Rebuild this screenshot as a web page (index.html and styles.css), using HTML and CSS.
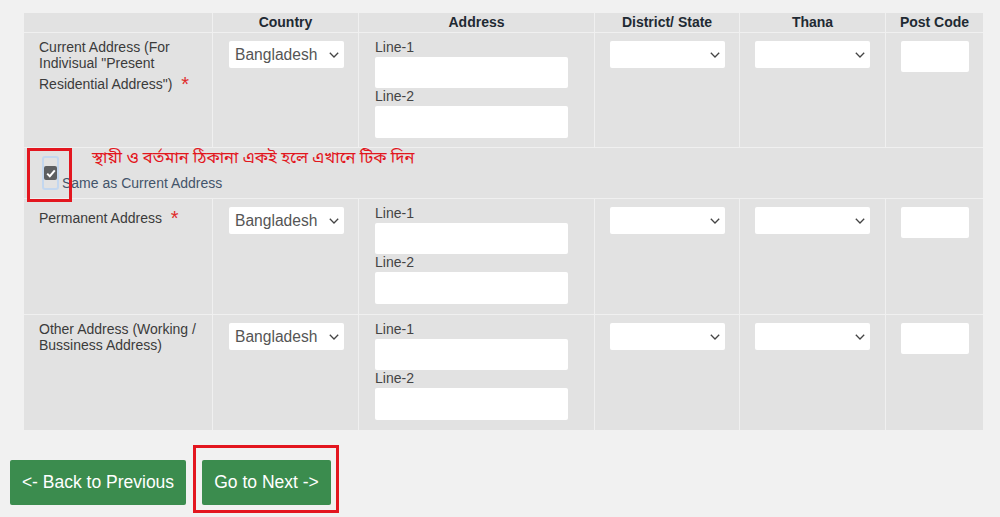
FILE: index.html
```html
<!DOCTYPE html>
<html lang="en">
<head>
<meta charset="utf-8">
<title>Address</title>
<link rel="stylesheet" href="styles.css">
</head>
<body>
<div class="page">
  <table class="addr">
    <thead>
      <tr>
        <th class="c-label"></th>
        <th class="c-country">Country</th>
        <th class="c-address">Address</th>
        <th class="c-district">District/ State</th>
        <th class="c-thana">Thana</th>
        <th class="c-post">Post Code</th>
      </tr>
    </thead>
    <tbody>
      <tr>
        <td class="label">Current Address (For Indivisual "Present Residential Address") <span class="req">*</span></td>
        <td><div class="sel sel-country"><span>Bangladesh</span><svg class="chev" width="10" height="6" viewBox="0 0 10 6"><path d="M0.8 0.8 L5 5 L9.2 0.8" fill="none" stroke="#444" stroke-width="1.3"/></svg></div></td>
        <td class="addr-cell">
          <div class="line-label">Line-1</div>
          <div class="inp inp-line"></div>
          <div class="line-label">Line-2</div>
          <div class="inp inp-line inp-line2"></div>
        </td>
        <td><div class="sel"><span></span><svg class="chev" width="10" height="6" viewBox="0 0 10 6"><path d="M0.8 0.8 L5 5 L9.2 0.8" fill="none" stroke="#444" stroke-width="1.3"/></svg></div></td>
        <td><div class="sel"><span></span><svg class="chev" width="10" height="6" viewBox="0 0 10 6"><path d="M0.8 0.8 L5 5 L9.2 0.8" fill="none" stroke="#444" stroke-width="1.3"/></svg></div></td>
        <td class="post"><div class="inp inp-post"></div></td>
      </tr>
      <tr>
        <td colspan="6" class="same-cell">
          <div class="same">
            <span class="note">স্থায়ী ও বর্তমান ঠিকানা একই হলে এখানে টিক দিন</span>
            <span class="focus"><span class="chk"><svg width="10" height="9" viewBox="0 0 10 9"><path d="M1.2 4.6 L3.8 7.2 L8.8 1.4" fill="none" stroke="#fff" stroke-width="2"/></svg></span></span>
            <span class="same-label">Same as Current Address</span>
            <span class="mark mark-chk"></span>
          </div>
        </td>
      </tr>
      <tr>
        <td class="label">Permanent Address <span class="req">*</span></td>
        <td><div class="sel sel-country"><span>Bangladesh</span><svg class="chev" width="10" height="6" viewBox="0 0 10 6"><path d="M0.8 0.8 L5 5 L9.2 0.8" fill="none" stroke="#444" stroke-width="1.3"/></svg></div></td>
        <td class="addr-cell tall">
          <div class="line-label">Line-1</div>
          <div class="inp inp-line"></div>
          <div class="line-label">Line-2</div>
          <div class="inp inp-line inp-line2"></div>
        </td>
        <td><div class="sel"><span></span><svg class="chev" width="10" height="6" viewBox="0 0 10 6"><path d="M0.8 0.8 L5 5 L9.2 0.8" fill="none" stroke="#444" stroke-width="1.3"/></svg></div></td>
        <td><div class="sel"><span></span><svg class="chev" width="10" height="6" viewBox="0 0 10 6"><path d="M0.8 0.8 L5 5 L9.2 0.8" fill="none" stroke="#444" stroke-width="1.3"/></svg></div></td>
        <td class="post"><div class="inp inp-post"></div></td>
      </tr>
      <tr class="last">
        <td class="label">Other Address (Working / Bussiness Address)</td>
        <td><div class="sel sel-country"><span>Bangladesh</span><svg class="chev" width="10" height="6" viewBox="0 0 10 6"><path d="M0.8 0.8 L5 5 L9.2 0.8" fill="none" stroke="#444" stroke-width="1.3"/></svg></div></td>
        <td class="addr-cell tall">
          <div class="line-label">Line-1</div>
          <div class="inp inp-line"></div>
          <div class="line-label">Line-2</div>
          <div class="inp inp-line inp-line2"></div>
        </td>
        <td><div class="sel"><span></span><svg class="chev" width="10" height="6" viewBox="0 0 10 6"><path d="M0.8 0.8 L5 5 L9.2 0.8" fill="none" stroke="#444" stroke-width="1.3"/></svg></div></td>
        <td><div class="sel"><span></span><svg class="chev" width="10" height="6" viewBox="0 0 10 6"><path d="M0.8 0.8 L5 5 L9.2 0.8" fill="none" stroke="#444" stroke-width="1.3"/></svg></div></td>
        <td class="post"><div class="inp inp-post"></div></td>
      </tr>
    </tbody>
  </table>

  <div class="actions">
    <button class="btn btn-back">&lt;- Back to Previous</button>
    <div class="next-wrap"><button class="btn btn-next">Go to Next -&gt;</button><span class="mark mark-next"></span></div>
  </div>
</div>
</body>
</html>
```

FILE: styles.css
```css
* { box-sizing: border-box; }

html, body {
  margin: 0;
  padding: 0;
  background: #f1f1f1;
  font-family: "Liberation Sans", Arial, sans-serif;
  font-size: 14px;
  color: #333;
}

.page {
  padding-top: 13px;
  padding-bottom: 12px;
}

.addr {
  margin-left: 24px;
  width: 959px;
  table-layout: fixed;
  border-collapse: separate;
  border-spacing: 0;
  background: #e2e2e2;
}

.addr th,
.addr td {
  border-right: 1px solid #f0f0f0;
  border-bottom: 1px solid #f0f0f0;
  vertical-align: top;
  padding: 0;
}

.addr th:last-child,
.addr td:last-child { border-right: none; }

.addr tr.last td { border-bottom: none; }

.addr th {
  height: 20px;
  line-height: 18px;
  font-size: 14px;
  font-weight: bold;
  color: #1f2a33;
  text-align: center;
}

.c-label { width: 189px; }
.c-country { width: 146px; }
.c-address { width: 236px; }
.c-district { width: 145px; }
.c-thana { width: 146px; }
.c-post { width: 97px; }

.label {
  padding: 6px 12px 8px 15px !important;
  line-height: 16px;
  color: #3b3b3b;
}

.req {
  color: #e02b2b;
  font-size: 20px;
  line-height: 22px;
  margin-left: 5px;
  position: relative;
  top: 2px;
}

.sel {
  margin: 8px 0 0 15px;
  width: 115px;
  height: 27px;
  background: #fff;
  border-radius: 2px;
  display: flex;
  align-items: center;
  justify-content: space-between;
  padding: 0 5px 0 6px;
  font-size: 15.6px;
  color: #555;
}

.sel-country { margin-left: 16px; }

.chev { flex: none; }

.addr-cell {
  padding: 6px 0 9px 16px !important;
}

.addr-cell.tall { padding-bottom: 10px !important; }

.line-label {
  line-height: 16px;
  color: #444;
}

.inp {
  background: #fff;
  border-radius: 2px;
}

.inp-line {
  width: 193px;
  height: 31px;
  margin-top: 2px;
}

.inp-line2 { height: 32px; }

.post { padding-left: 15px !important; }

.inp-post {
  margin-top: 8px;
  width: 68px;
  height: 31px;
}

.same-cell { padding: 0 !important; }

.same {
  position: relative;
  display: flex;
  align-items: flex-start;
  height: 50px;
  padding-left: 18px;
}

.focus {
  margin-top: 8px;
  width: 17px;
  height: 34px;
  border: 2px solid #c3d7ef;
  border-radius: 3px;
  display: flex;
  align-items: center;
  justify-content: center;
}

.chk {
  width: 14px;
  height: 14px;
  background: #5d5f61;
  border-radius: 2px;
  display: flex;
  align-items: center;
  justify-content: center;
}

.same-label {
  margin-top: 27px;
  margin-left: 3px;
  line-height: 16px;
  color: #43546a;
}

.note {
  position: absolute;
  left: 68px;
  top: 0;
  font-family: "Noto Sans Bengali", "Noto Serif Bengali", "Lohit Bengali", "FreeSans", sans-serif;
  font-size: 16.5px;
  line-height: 22px;
  color: #e2161d;
  white-space: nowrap;
}

.mark {
  position: absolute;
  border: 3px solid #e3161f;
  pointer-events: none;
}

.mark-chk {
  left: 3px;
  top: 0;
  width: 45px;
  height: 54px;
  z-index: 2;
}

.actions {
  display: flex;
  align-items: flex-start;
  gap: 16px;
  padding-left: 10px;
  margin-top: 30px;
}

.btn {
  display: block;
  height: 45px;
  border: none;
  border-radius: 2px;
  background: #3b8c4e;
  color: #fff;
  font-family: "Liberation Sans", Arial, sans-serif;
  font-size: 17.5px;
  padding: 0;
}

.btn-back { width: 176px; }
.btn-next { width: 129px; }

.next-wrap {
  position: relative;
}

.mark-next {
  left: -9px;
  top: -15px;
  width: 146px;
  height: 68px;
}
```
